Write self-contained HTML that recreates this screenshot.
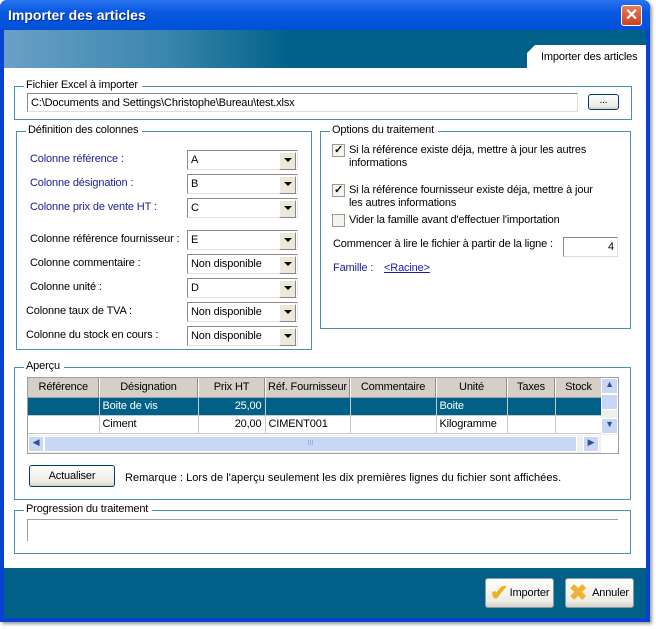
<!DOCTYPE html>
<html><head><meta charset="utf-8"><style>
*{margin:0;padding:0;box-sizing:border-box}
body{width:656px;height:629px;background:#fff;position:relative;overflow:hidden;font-family:"Liberation Sans",sans-serif;font-size:11px;color:#000;letter-spacing:-0.15px}
.a{position:absolute}
.win{left:0;top:0;width:650px;height:622px;background:#0842d0;border-radius:7px 7px 0 0;box-shadow:2px 2px 3px #999}
.title{left:0;top:0;width:650px;height:30px;border-radius:7px 7px 0 0;background:linear-gradient(#2a74f0,#0858e0 40%,#0050d8)}
.title span{position:absolute;left:8px;top:7px;color:#fff;font-weight:bold;font-size:14px;text-shadow:1px 1px #0a2a80;letter-spacing:0}
.close{left:621px;top:5px;width:21px;height:21px;border:1px solid #fff;border-radius:3px;background:linear-gradient(#e87a5a,#d0401c);color:#fff;font-size:16px;font-weight:bold;text-align:center;line-height:19px}
.hdr{left:4px;top:30px;width:642px;height:40px;background:linear-gradient(90deg,#6aa0c6,#3a86ae 25%,#006088 45%,#006088)}
.content{left:4px;top:68px;width:642px;height:500px;background:#fff}
.bot{left:4px;top:568px;width:642px;height:50px;background:#006088}
.tab{left:527px;top:45px;width:119px;height:24px;background:#fff;clip-path:polygon(8px 0,100% 0,100% 100%,0 100%,0 8px)}
.grp{position:absolute;border:1px solid #4890b8}
.lg{position:absolute;background:#fff;padding:0 4px 0 2px;top:-8px;left:9px}
.inp{position:absolute;border:1px solid;border-color:#8a8a80 #e0ded0 #e0ded0 #8a8a80;background:#fff;padding:3px 3px;height:19px}
.cb{position:absolute;width:111px;height:20px;border:1px solid;border-color:#8a8a80 #e8e6da #e8e6da #8a8a80;background:#fff;padding:3px 3px}
.cb:after{content:"";position:absolute;right:1px;top:1px;width:15px;height:16px;background:#ece9d8;border:1px solid;border-color:#fff #888 #888 #fff}
.cb i{position:absolute;right:5px;top:7px;border:4px solid transparent;border-top:4px solid #000;border-bottom:0;z-index:2}
.lb{position:absolute}
.blue{color:#202090}
.chk{position:absolute;width:13px;height:13px;border:1px solid #9a9a90;background:#f4f3ee;font-size:11px;line-height:11px;text-align:center;font-weight:bold}
.btn{position:absolute;border:1px solid #003c74;border-radius:3px;background:linear-gradient(#fff,#ecebe4 80%,#d6d0c5);text-align:center}
table{border-collapse:collapse;table-layout:fixed}
td{border-right:1px solid #c8c8c8;border-bottom:1px solid #c8c8c8;height:18px;padding:0 3px;white-space:nowrap;overflow:hidden}
th{font-weight:normal;background:#d4d0c8;border-right:1px solid #fff;border-bottom:1px solid #a0a0a0;height:19px;box-shadow:inset -1px 0 #909090}
.sel td{background:#006088;color:#fff}
.sb{position:absolute;background:#c8d8f4;border:1px solid #fff}
</style></head><body>
<div class="a win"></div>
<div class="a title"><span>Importer des articles</span></div>
<div class="a close">✕</div>
<div class="a hdr"></div>
<div class="a content"></div>
<div class="a bot"></div>
<div class="a tab"><span style="position:absolute;left:14px;top:6px">Importer des articles</span></div>

<div class="grp" style="left:14px;top:86px;width:618px;height:34px"><span class="lg">Fichier Excel à importer</span></div>
<div class="inp" style="left:27px;top:93px;width:551px">C:\Documents and Settings\Christophe\Bureau\test.xlsx</div>
<div class="btn" style="left:588px;top:94px;width:31px;height:16px;font-size:10px;line-height:12px">...</div>

<div class="grp" style="left:16px;top:131px;width:296px;height:219px"><span class="lg">Définition des colonnes</span></div>
<div class="lb blue" style="left:30px;top:153px">Colonne référence :</div>
<div class="lb blue" style="left:30px;top:177px">Colonne désignation :</div>
<div class="lb blue" style="left:30px;top:201px">Colonne prix de vente HT :</div>
<div class="lb" style="left:30px;top:233px">Colonne référence fournisseur :</div>
<div class="lb" style="left:30px;top:257px">Colonne commentaire :</div>
<div class="lb" style="left:30px;top:281px">Colonne unité :</div>
<div class="lb" style="left:26px;top:305px">Colonne taux de TVA :</div>
<div class="lb" style="left:26px;top:329px">Colonne du stock en cours :</div>
<div class="cb" style="left:187px;top:150px">A<i></i></div>
<div class="cb" style="left:187px;top:174px">B<i></i></div>
<div class="cb" style="left:187px;top:198px">C<i></i></div>
<div class="cb" style="left:187px;top:230px">E<i></i></div>
<div class="cb" style="left:187px;top:254px">Non disponible<i></i></div>
<div class="cb" style="left:187px;top:278px">D<i></i></div>
<div class="cb" style="left:187px;top:302px">Non disponible<i></i></div>
<div class="cb" style="left:187px;top:326px">Non disponible<i></i></div>

<div class="grp" style="left:320px;top:131px;width:311px;height:198px"><span class="lg">Options du traitement</span></div>
<div class="chk" style="left:332px;top:144px">✓</div>
<div class="lb" style="left:349px;top:144px;line-height:13px">Si la référence existe déja, mettre à jour les autres<br>informations</div>
<div class="chk" style="left:332px;top:184px">✓</div>
<div class="lb" style="left:349px;top:184px;line-height:13px">Si la référence fournisseur existe déja, mettre à jour<br>les autres informations</div>
<div class="chk" style="left:332px;top:214px"></div>
<div class="lb" style="left:349px;top:214px">Vider la famille avant d'effectuer l'importation</div>
<div class="lb" style="left:333px;top:238px">Commencer à lire le fichier à partir de la ligne :</div>
<div class="inp" style="left:563px;top:237px;width:55px;height:20px;text-align:right">4</div>
<div class="lb blue" style="left:333px;top:262px">Famille :</div>
<div class="lb" style="left:384px;top:262px;color:#1a1ab0;text-decoration:underline">&lt;Racine&gt;</div>

<div class="grp" style="left:14px;top:367px;width:617px;height:133px"><span class="lg">Aperçu</span></div>
<div class="a" style="left:27px;top:377px;width:592px;height:77px;border:1px solid #a0a0a0;background:#fff;overflow:hidden">
<table style="width:574px">
<colgroup><col style="width:71px"><col style="width:99px"><col style="width:67px"><col style="width:85px"><col style="width:86px"><col style="width:71px"><col style="width:48px"><col style="width:47px"></colgroup>
<tr><th>Référence</th><th>Désignation</th><th>Prix HT</th><th>Réf. Fournisseur</th><th>Commentaire</th><th>Unité</th><th>Taxes</th><th>Stock</th></tr>
<tr class="sel"><td></td><td>Boite de vis</td><td style="text-align:right">25,00</td><td></td><td></td><td>Boite</td><td></td><td></td></tr>
<tr><td></td><td>Ciment</td><td style="text-align:right">20,00</td><td>CIMENT001</td><td></td><td>Kilogramme</td><td></td><td></td></tr>
</table>
<div class="a" style="left:573px;top:0;width:17px;height:57px;background:#f0f0ea">
<div class="sb" style="left:0;top:0;width:17px;height:16px;font-size:9px;text-align:center;color:#305090">▲</div>
<div class="sb" style="left:0;top:16px;width:17px;height:16px"></div>
<div class="sb" style="left:0;top:40px;width:17px;height:16px;font-size:9px;text-align:center;color:#305090">▼</div></div>
<div class="a" style="left:0;top:57px;width:573px;height:18px;background:#f0f0ea">
<div class="sb" style="left:0;top:1px;width:16px;height:16px;font-size:9px;color:#305090;text-align:center">◀</div>
<div class="sb" style="left:16px;top:1px;width:533px;height:16px;font-size:7px;color:#8aa0d0;text-align:center;line-height:14px">III</div>
<div class="sb" style="left:555px;top:1px;width:16px;height:16px;font-size:9px;color:#305090;text-align:center">▶</div></div>
</div>
<div class="btn" style="left:29px;top:465px;width:86px;height:22px;line-height:20px">Actualiser</div>
<div class="lb" style="left:125px;top:472px;letter-spacing:0.05px">Remarque : Lors de l'aperçu seulement les dix premières lignes du fichier sont affichées.</div>

<div class="grp" style="left:14px;top:510px;width:617px;height:44px"><span class="lg">Progression du traitement</span></div>
<div class="a" style="left:27px;top:519px;width:591px;height:22px;border-top:1px solid #a0a098;border-left:1px solid #a0a098"></div>

<div class="btn" style="left:485px;top:578px;width:69px;height:30px;border-color:#8a9ab0;line-height:28px;padding-left:20px"><span style="position:absolute;left:4px;top:2px;color:#f0b020;font-size:22px;font-weight:bold;line-height:24px">✔</span>Importer</div>
<div class="btn" style="left:565px;top:578px;width:69px;height:30px;border-color:#8a9ab0;line-height:28px;padding-left:22px"><span style="position:absolute;left:3px;top:2px;color:#f0b030;font-size:22px;font-weight:bold;line-height:24px">✖</span>Annuler</div>
</body></html>
